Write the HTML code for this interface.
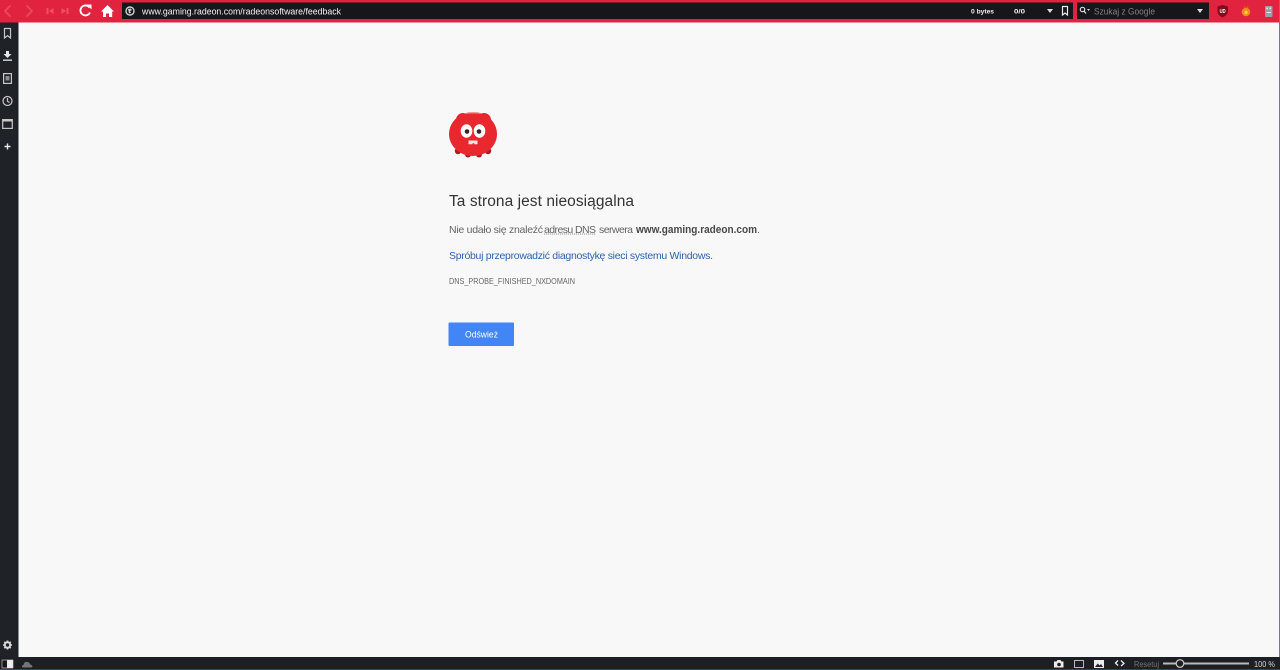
<!DOCTYPE html>
<html lang="pl"><head><meta charset="utf-8"><title>Ta strona jest nieosiągalna</title>
<style>
html,body{margin:0;padding:0;width:1280px;height:670px;overflow:hidden;background:#f8f8f8}
svg{display:block;position:absolute;left:0;top:0}
text{font-family:"Liberation Sans",sans-serif}
</style></head><body>
<svg width="1280" height="670" viewBox="0 0 1280 670" xmlns="http://www.w3.org/2000/svg">
<rect width="1280" height="670" fill="#f8f8f8"/>
<!-- top bar -->
<rect width="1280" height="22.500" fill="#e2233f"/>
<rect x="122" y="2.500" width="951" height="16.500" fill="#15171b"/>
<rect x="1077" y="2.500" width="132" height="16.500" fill="#15171b"/>
<rect x="1279" y="0" width="1" height="670" fill="#5d7fa8"/>
<!-- nav icons -->
<g fill="none" stroke-linecap="round" stroke-linejoin="round">
<path d="M10 6 5 11 10 16" stroke="#ea4a60" stroke-width="1.700"/>
<path d="M27 6 32 11 27 16" stroke="#ea4a60" stroke-width="1.700"/>
</g>
<path d="M46.500 8h2v6h-2zM53.500 8v6l-4.500-3zM68.500 8v6h-2V8zM61.500 8v6l4.500-3z" fill="#ef4f65"/>
<path d="M89.500 7.500A5 5 0 1 0 90 12.500" fill="none" stroke="#fff" stroke-width="1.800"/>
<path d="M86.500 4.500h5v5z" fill="#fff"/>
<path d="M101 11.500 107.500 5 114 11.500h-1.800V17H103v-5.500z" fill="#fff"/>
<path d="M106 17v-3.500h3V17z" fill="#e2233f"/>
<!-- globe -->
<circle cx="130" cy="11" r="4" fill="none" stroke="#cfd0d2" stroke-width="1.400"/>
<path d="M128 9l2.500-.5 1.500 1.500-2 1 1 2-2 .5-.5-2.500z" fill="#cfd0d2"/>
<text x="142" y="14.500" font-size="9" fill="#f4f4f4" textLength="199" lengthAdjust="spacingAndGlyphs">www.gaming.radeon.com/radeonsoftware/feedback</text>
<text x="971" y="13.500" font-size="6.500" font-weight="bold" fill="#f0f0f0" textLength="23" lengthAdjust="spacingAndGlyphs">0 bytes</text>
<text x="1014" y="13.500" font-size="6.500" font-weight="bold" fill="#f0f0f0" textLength="11" lengthAdjust="spacingAndGlyphs">0/0</text>
<path d="M1047 9h6l-3 4z" fill="#dcdcdc"/>
<path d="M1062.500 6.500h5V15l-2.500-2-2.500 2z" fill="none" stroke="#e8e8e8" stroke-width="1.200"/>
<circle cx="1082.500" cy="9.500" r="2.200" fill="none" stroke="#ddd" stroke-width="1.200"/>
<path d="M1084 11l2 2.500" stroke="#ddd" stroke-width="1.300"/>
<path d="M1087 9h3l-1.500 2z" fill="#ddd"/>
<text x="1094" y="14.500" font-size="9" fill="#808286" textLength="61" lengthAdjust="spacingAndGlyphs">Szukaj z Google</text>
<path d="M1197 9h6l-3 4z" fill="#dcdcdc"/>
<!-- extensions -->
<path d="M1217.500 6.500 1222.500 5 1228 6.500V11c0 3-2.500 5-5.500 6.500-3-1.500-5-3.500-5-6.500z" fill="#7c0f1c"/>
<text x="1219.600" y="13" font-size="5.500" font-weight="bold" fill="#fff" textLength="6" lengthAdjust="spacingAndGlyphs">UD</text>
<circle cx="1246" cy="12" r="4.300" fill="#ef8a1c"/>
<path d="M1243.500 8l1-2.500 1.500 2 2-2 .5 2.500z" fill="#d9502a"/>
<circle cx="1246" cy="12.500" r="1.700" fill="#f7cf3a"/>
<rect x="1265" y="6" width="7.500" height="11" rx="1" fill="#9a9ea6"/>
<rect x="1266.500" y="7.500" width="1.500" height="1.800" fill="#e9e9e9"/>
<rect x="1269.500" y="7.500" width="1.500" height="1.800" fill="#e9e9e9"/>
<rect x="1266.500" y="12" width="4.500" height="1" fill="#e9e9e9"/>
<!-- sidebar -->
<rect y="22.500" width="18.500" height="634.500" fill="#1f2227"/>
<g fill="none" stroke="#c8c8c8" stroke-width="1.200">
<path d="M4.500 28.500h6v9.500l-3-2.400-3 2.400z"/>
<rect x="3.600" y="73.600" width="7.800" height="9.800"/>
<circle cx="7.500" cy="101" r="4.500"/>
<path d="M7.500 98v3.300l2 1.200"/>
<rect x="2.700" y="119.600" width="9.600" height="8.800"/>
</g>
<path d="M6 51h3v3h2.500L7.500 58 3.500 54H6z" fill="#e8e8e8"/>
<rect x="3" y="59.500" width="9" height="1.300" fill="#e8e8e8"/>
<rect x="5.500" y="76" width="4" height="4.500" fill="#8a8c8e"/>
<rect x="3" y="120" width="9" height="1.500" fill="#c8c8c8"/>
<path d="M6.800 143.500h1.400v2.300h2.300v1.400H8.200v2.300H6.800v-2.300H4.500v-1.400h2.300z" fill="#e8e8e8"/>
<circle cx="7.500" cy="645" r="2.700" fill="none" stroke="#d8d8d8" stroke-width="2"/>
<g stroke="#d8d8d8" stroke-width="1.600"><path d="M7.500 640.500v1.500M7.500 648v1.500M3 645h1.500M10.500 645H12M4.300 641.800l1 1M9.700 647.200l1 1M4.300 648.200l1-1M9.700 642.800l1-1"/></g>
<!-- bottom bar -->
<rect y="657" width="1280" height="12" fill="#1c1f24"/>
<rect y="669" width="1280" height="1" fill="#1f4c79"/>
<rect x="2" y="660" width="11" height="8" fill="#eee"/>
<rect x="2" y="660" width="5" height="8" fill="#16181c"/>
<rect x="2" y="660" width="11" height="8" fill="none" stroke="#ddd" stroke-width=".6"/>
<path d="M23 667.500c-1.500 0-1.500-2.500.5-2.500 .3-2.500 2-3.500 3.500-3 1.500 0 3 1 3 2.500 2.500 0 3.500 3 1 3z" fill="#70757b"/>
<path d="M1054 661.500h2.500l1-1.500h3l1 1.500h2v6h-9.500z" fill="#ececec"/>
<circle cx="1059" cy="664.500" r="1.800" fill="#1c1f24"/>
<rect x="1074.500" y="660.500" width="9" height="7" fill="none" stroke="#b6b8ba" stroke-width="1"/>
<rect x="1094" y="660" width="10" height="8" fill="#ececec"/>
<path d="M1095 667l2.800-3.500 1.700 2 1.500-1.500 2 3z" fill="#1c1f24"/>
<path d="M1118 660.500 1115.500 663 1118 665.500M1121 660.500 1124 663.500 1121 666" fill="none" stroke="#ececec" stroke-width="1.300"/>
<text x="1134" y="667" font-size="8" fill="#72757a" textLength="25" lengthAdjust="spacingAndGlyphs">Resetuj</text>
<rect x="1163" y="662.500" width="86" height="2" fill="#b8babc"/>
<circle cx="1180" cy="663.500" r="3.800" fill="#1c1f24" stroke="#d4d4d4" stroke-width="1.100"/>
<text x="1254" y="667" font-size="8.500" fill="#d8d8d8" textLength="21" lengthAdjust="spacingAndGlyphs">100 %</text>
<!-- mascot -->
<g>
<circle cx="458" cy="151" r="3.200" fill="#a81d24"/>
<circle cx="468" cy="154.500" r="3" fill="#a81d24"/>
<circle cx="479" cy="154.500" r="3" fill="#a81d24"/>
<circle cx="488" cy="151" r="3.200" fill="#a81d24"/>
<ellipse cx="473" cy="134" rx="24" ry="22" fill="#e8272e"/>
<circle cx="463" cy="120" r="7" fill="#e8272e"/>
<circle cx="484" cy="120" r="7" fill="#e8272e"/>
<path d="M464 114c4-2.500 13-2.500 18 0-5-.8-13-.8-18 0z" fill="#f2a5a5"/>
<ellipse cx="466.500" cy="131" rx="5.800" ry="6.800" fill="#fff"/>
<ellipse cx="479.500" cy="131" rx="5.800" ry="6.800" fill="#fff"/>
<circle cx="467" cy="131.500" r="2.300" fill="#3a2224"/>
<circle cx="479" cy="131.500" r="2.300" fill="#3a2224"/>
<path d="M468.500 140.500h9v3.800h-3.200v-1h-1.800v1h-4z" fill="#fbe3e0"/>
</g>
<!-- content -->
<text x="449" y="206" font-size="15.500" fill="#333" textLength="185" lengthAdjust="spacing">Ta strona jest nieosiągalna</text>
<text x="449" y="233" font-size="10.500" fill="#646464" textLength="94" lengthAdjust="spacing">Nie udało się znaleźć</text>
<text x="544" y="233" font-size="10.500" fill="#646464" textLength="52" lengthAdjust="spacing">adresu DNS</text>
<path d="M544 234h52" stroke="#777" stroke-width=".8" stroke-dasharray="1.200 .8"/>
<text x="599" y="233" font-size="10.500" fill="#646464" textLength="34" lengthAdjust="spacing">serwera</text>
<text x="636" y="233" font-size="11" font-weight="bold" fill="#484848" textLength="121" lengthAdjust="spacingAndGlyphs">www.gaming.radeon.com</text>
<text x="757" y="233" font-size="10.500" fill="#646464">.</text>
<text x="449" y="259" font-size="10.500" fill="#2f62ae" textLength="264" lengthAdjust="spacing">Spróbuj przeprowadzić diagnostykę sieci systemu Windows.</text>
<text x="449" y="284" font-size="8.500" fill="#666" textLength="126" lengthAdjust="spacingAndGlyphs">DNS_PROBE_FINISHED_NXDOMAIN</text>
<rect x="448.500" y="322.500" width="65.500" height="23.500" rx="1" fill="#4285f4"/>
<text x="465" y="337.500" font-size="9.500" fill="#fff" textLength="33" lengthAdjust="spacingAndGlyphs">Odśwież</text>
</svg>
</body></html>
